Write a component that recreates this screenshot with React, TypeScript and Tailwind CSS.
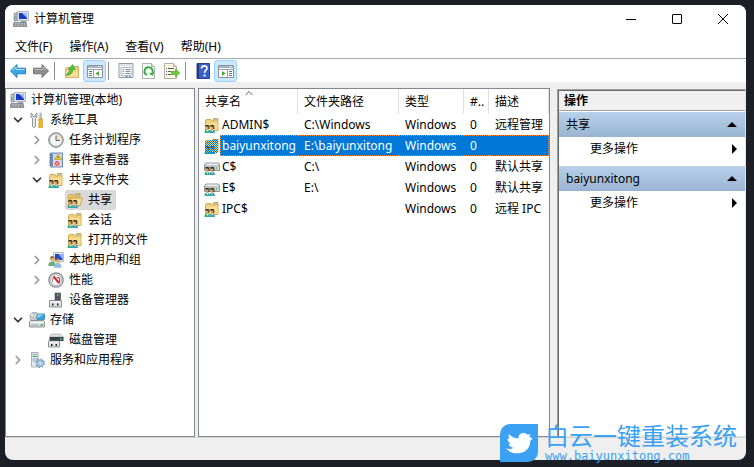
import { useState } from 'react';
import type { ReactNode } from 'react';
import { ChevronDown, ChevronRight, ChevronUp } from 'lucide-react';
import clsx from 'clsx';

type IconName =
  | 'computer' | 'tools' | 'clock' | 'events' | 'share' | 'shareOpen' | 'users'
  | 'perf' | 'device' | 'storage' | 'disk' | 'services' | 'drive';

interface TreeItem {
  label: string;
  icon: IconName;
  open?: boolean;
  expandable?: boolean;
  children?: TreeItem[];
}

const tree: TreeItem[] = [
  {
    label: '系统工具',
    icon: 'tools',
    open: true,
    expandable: true,
    children: [
      { label: '任务计划程序', icon: 'clock', expandable: true },
      { label: '事件查看器', icon: 'events', expandable: true },
      {
        label: '共享文件夹',
        icon: 'share',
        open: true,
        expandable: true,
        children: [
          { label: '共享', icon: 'shareOpen' },
          { label: '会话', icon: 'share' },
          { label: '打开的文件', icon: 'share' },
        ],
      },
      { label: '本地用户和组', icon: 'users', expandable: true },
      { label: '性能', icon: 'perf', expandable: true },
      { label: '设备管理器', icon: 'device' },
    ],
  },
  {
    label: '存储',
    icon: 'storage',
    open: true,
    expandable: true,
    children: [{ label: '磁盘管理', icon: 'disk' }],
  },
  { label: '服务和应用程序', icon: 'services', expandable: true },
];

const shares: { name: string; path: string; icon: IconName; note: string }[] = [
  { name: 'ADMIN$', path: 'C:\\Windows', icon: 'share', note: '远程管理' },
  { name: 'baiyunxitong', path: 'E:\\baiyunxitong', icon: 'share', note: '' },
  { name: 'C$', path: 'C:\\', icon: 'drive', note: '默认共享' },
  { name: 'E$', path: 'E:\\', icon: 'drive', note: '默认共享' },
  { name: 'IPC$', path: '', icon: 'share', note: '远程 IPC' },
];

const menus = ['文件(F)', '操作(A)', '查看(V)', '帮助(H)'];

// the pair of heads that marks anything shared
const people = (
  <>
    <path d="M.5 16c0-2.500.8-3.500 2.500-3.500s3 1 3 3.500z" fill="#35b07c" />
    <path d="M5.500 16c0-2.500.8-3.500 2.500-3.500s3 1 3 3.500z" fill="#3d9fc0" />
    <path d="M2.300 13l1.200 1.800L4.700 13M7.200 13l1 1.600 1-1.600" fill="#eef8f4" />
    <path d="M2.500 9h2.500v3l-1.200 1-1.300-1zM7.200 9h2.500v3l-1.200 1-1.300-1z" fill="#cf9c5c" />
    <path d="M1.500 8h3l1 1v3h-1V9.500h-2l-1 .5zM6.300 8h3l1 1v3h-1V9.500h-2l-1 .5z" fill="#3d2f20" />
  </>
);

const glyphs: Record<IconName, ReactNode> = {
  computer: (
    <>
      <path d="M1 2.500L4 1.500V10H1z" fill="#b9bec4" stroke="#747b84" strokeWidth=".6" />
      <path d="M2 5v3" stroke="#40b070" />
      <path d="M4.500.5h11v9h-11z" fill="#dfe3e8" stroke="#a3a9b2" strokeWidth=".8" />
      <path d="M6 2h8v6H6z" fill="#173bc4" />
      <path d="M9 2h5v5z" fill="#9fbcf7" />
      <path d="M8 10h5l1 1.500H7z" fill="#a2a8af" />
      <path d="M1 11.500h12l1 4H0z" fill="#858b92" stroke="#6b7179" strokeWidth=".6" />
      <path d="M2 12.700h10M1.500 14.200h9" stroke="#dfe2e5" strokeDasharray="2 1" strokeWidth=".7" />
      <path d="M11 14h2" stroke="#d8c64b" />
    </>
  ),
  tools: (
    <>
      <path d="M2 1v4l1.500 1.500v7.500c0 2 3 2 3 0V6.500L8 5V1L6.300 2.500v2H3.800v-2z" fill="#e6e8ea" stroke="#7b8187" strokeWidth=".8" />
      <path d="M10.800 1h1.700v6h-1.700z" fill="#c6c9cc" stroke="#888" strokeWidth=".4" />
      <path d="M9.800 7h3.700v2l-.7 1 .7 1v4.500H9.800V11l.7-1-.7-1z" fill="#f7b81c" stroke="#c08510" strokeWidth=".6" />
    </>
  ),
  clock: (
    <>
      <circle cx="8" cy="8" r="7.300" fill="#c3c6ca" stroke="#74787d" strokeWidth=".9" />
      <circle cx="8" cy="8" r="5.600" fill="#f7f8fa" />
      <path d="M8 8V2.400A5.600 5.600 0 0 1 13.600 8z" fill="#f6dfae" />
      <path d="M8 3.500V8.500h4" stroke="#4e6088" fill="none" />
    </>
  ),
  events: (
    <>
      <path d="M2.500 1h12v14h-12z" fill="#c9dbf5" stroke="#62779f" strokeWidth=".9" />
      <path d="M3 1.500h2v13H3z" fill="#6d8ec4" />
      <path d="M1 3h2.500M1 5.500h2.500M1 8h2.500M1 10.500h2.500M1 13h2.500" stroke="#68768a" strokeWidth=".8" />
      <path d="M10 2.200l3.500 5.300h-7z" fill="#ffd62e" stroke="#a58d22" strokeWidth=".6" />
      <path d="M10 4.300v2" stroke="#333" strokeWidth=".9" />
      <circle cx="9" cy="11.500" r="2.700" fill="#e2453c" stroke="#fff" strokeWidth=".5" />
      <path d="M8 10.500l2 2m0-2l-2 2" stroke="#fff" strokeWidth=".8" />
    </>
  ),
  share: (
    <>
      <path d="M1.500 13.500V3.500l1-1H7L8.500 4h1V1.500h4.500V13.500z" fill="#f0cd76" stroke="#c99a3c" strokeWidth=".8" />
      <path d="M2 5.500h11.600V13H2z" fill="#f9dc90" />
      <path d="M10.500 3h2.500" stroke="#6cb0e0" />
      {people}
    </>
  ),
  shareOpen: (
    <>
      <path d="M1.500 13.500V3.500l1-1H6L7.500 4h1V1.500h4.500V13.500z" fill="#e9c468" stroke="#c99a3c" strokeWidth=".8" />
      <path d="M9.500 3H12" stroke="#6cb0e0" />
      <path d="M4 6h11.500L13 13.500H2z" fill="#fbe09a" stroke="#c4953a" strokeWidth=".8" />
      {people}
    </>
  ),
  users: (
    <>
      <path d="M5.500.5h10v9h-10z" fill="#dfe3e8" stroke="#a0a6ae" strokeWidth=".7" />
      <path d="M7 2h7.500v6H7z" fill="#1f49c8" />
      <path d="M10.500 2h4v5z" fill="#9ab6f3" />
      <path d="M.3 14c0-3.500 1.500-4.500 3.700-4.500s3.500 1 3.500 4.500z" fill="#6bb070" />
      <path d="M6 15.700c0-3.700 1.500-4.700 3.800-4.700s3.700 1 3.700 4.700z" fill="#8bbfe6" />
      <circle cx="4.300" cy="7" r="2.300" fill="#dcae78" />
      <path d="M2 7c0-4 4.700-3.700 4.700-.3L5 5.500z" fill="#8a6538" />
      <circle cx="9.700" cy="9" r="2.300" fill="#e6bb86" />
      <path d="M7.300 9.300c-.3-4.200 4.700-4.200 4.800 0l-1.500-2z" fill="#936a3a" />
    </>
  ),
  perf: (
    <>
      <circle cx="8" cy="8" r="7.200" fill="#e9eaeb" stroke="#808388" strokeWidth="1.200" />
      <circle cx="8" cy="8" r="5.400" fill="#fff" stroke="#8c8f93" strokeWidth=".7" />
      <path d="M4.500 10V7.200l1-1.700M10.800 5.200l.8 1.500V10" stroke="#757575" strokeWidth=".8" fill="none" />
      <path d="M5.500 4.500l5.500 6.500" stroke="#d4262b" strokeWidth="2" />
      <path d="M8.700 5.500h2l.8 2v3" stroke="#d4262b" fill="none" />
    </>
  ),
  device: (
    <>
      <path d="M7 1h5.500v8H7z" fill="#55595f" stroke="#484c51" strokeWidth=".6" />
      <path d="M9 3h1.500" stroke="#4ae05c" strokeWidth="1.500" />
      <path d="M1.500 8.500h12V15h-12z" fill="#dfe1e3" stroke="#70747a" strokeWidth=".8" />
      <path d="M2 9h11v1.500H2z" fill="#f6f6f6" />
      <path d="M4 11.500h1.500v2H4zM9 11.500h1.500v2H9z" fill="#222" />
    </>
  ),
  storage: (
    <>
      <circle cx="5.700" cy="5" r="4.700" fill="#c9cdd1" stroke="#8a9097" strokeWidth=".7" />
      <path d="M5.700 5L2 2.500M5.700 5L9 1.500" stroke="#f4f6f8" strokeWidth="1.300" />
      <circle cx="5.700" cy="5" r="1.400" fill="#fff" stroke="#80868c" strokeWidth=".6" />
      <path d="M8 2h7.500v5.500H8z" fill="#2fa3dd" stroke="#2a78a6" strokeWidth=".7" />
      <path d="M8.500 2.500h6.500L8.500 6z" fill="#9adcf8" />
      <path d="M.5 9.500l1-1h13l1 1v5.500H.5z" fill="#d9dcdf" stroke="#787e84" strokeWidth=".8" />
      <path d="M1.500 10.500h13" stroke="#fff" />
      <path d="M2 13h7" stroke="#a2a7ac" />
      <path d="M11.500 13H14" stroke="#24c545" strokeWidth="1.500" />
    </>
  ),
  disk: (
    <>
      <path d="M3.500 2h9l3 3H1.500z" fill="#dfe2e4" stroke="#9a9ea3" strokeWidth=".6" />
      <path d="M1.500 5h14v4h-14z" fill="#3c4045" />
      <path d="M12 7h2" stroke="#34dd4c" strokeWidth="1.500" />
      <path d="M.5 9h11v6H.5z" fill="#dfe1e3" stroke="#75797e" strokeWidth=".8" />
      <path d="M1 9.500h10v1.200H1z" fill="#f6f6f6" />
      <path d="M3 12h1.500v2H3zM7.500 12H9v2H7.500z" fill="#222" />
    </>
  ),
  services: (
    <>
      <path d="M2.500.5H9V15H2.500z" fill="#e3e8ed" stroke="#98a0a9" strokeWidth=".8" />
      <path d="M3.500 2.500H8M3.500 7H8M3.500 9H8" stroke="#8794a3" strokeWidth=".8" />
      <path d="M3.500 4.500H8" stroke="#37ad68" />
      <circle cx="11.200" cy="11.200" r="3.400" fill="#b9d3ea" stroke="#6f9cc4" />
      <circle cx="11.200" cy="11.200" r="4.200" fill="none" stroke="#6f9cc4" strokeWidth="1.200" strokeDasharray="1.500 1.800" />
      <circle cx="11.200" cy="11.200" r="1.300" fill="#fff" stroke="#6f9cc4" strokeWidth=".6" />
    </>
  ),
  drive: (
    <>
      <path d="M2 4h12.500l1 2v5.500H.5V6z" fill="#b9bdc1" stroke="#7d8186" strokeWidth=".8" />
      <path d="M2.500 4.500h11.500l.7 1.700H1.500z" fill="#eceeef" />
      <path d="M11.500 7.500h3v3h-3z" fill="#e3e5e7" />
      <path d="M12.500 8v2" stroke="#2fc94c" />
      {people}
    </>
  ),
};

function Icon({ name, dimmed }: { name: IconName; dimmed?: boolean }) {
  return (
    <svg viewBox="0 0 16 16" className="size-4 shrink-0" aria-hidden="true">
      {glyphs[name]}
      {dimmed && (
        <>
          <pattern id="dither" width="2" height="2" patternUnits="userSpaceOnUse">
            <path d="M0 0h1v1H0zM1 1h1v1H1z" fill="#0078d7" />
          </pattern>
          <path d="M1 3l7-1 1-1h5v13l-4 2H1z" fill="url(#dither)" shapeRendering="crispEdges" />
        </>
      )}
    </svg>
  );
}

function ToolButton({ label, active, children }: { label: string; active?: boolean; children: ReactNode }) {
  return (
    <button
      aria-label={label}
      className={clsx(
        'flex h-[22px] w-[23px] items-center justify-center rounded-[3px] border',
        active ? 'border-[#99d1ff] bg-[#cce8ff]' : 'border-transparent',
      )}
    >
      <svg viewBox="0 0 16 16" className="size-4 shrink-0" aria-hidden="true">{children}</svg>
    </button>
  );
}

function Separator() {
  return <span className="mr-[5px] ml-0.5 h-[18px] w-px bg-[#8c8c8c]" />;
}

function Toolbar() {
  return (
    <div className="flex h-[23px] shrink-0 items-center bg-white pl-px">
      <ToolButton label="后退">
        <path d="M.5 8L7 1.500v3.700h8.500v5.600H7v3.700z" fill="#36a7e8" stroke="#2278b3" strokeWidth=".9" />
        <path d="M2.500 7.500L6 4v2.500h8.500" stroke="#a5e0fb" fill="none" />
      </ToolButton>
      <ToolButton label="前进">
        <path d="M15.500 8L9 1.500v3.700H.5v5.600H9v3.700z" fill="#8d8d8d" stroke="#6c6c6c" strokeWidth=".9" />
        <path d="M1.500 6.500H10V4L13 7" stroke="#bcbcbc" fill="none" />
      </ToolButton>
      <Separator />
      <ToolButton label="上一级">
        <path d="M1.500 14.500V5.500l1-1H6L7.500 6H9V3.500h5.500v11z" fill="#f1cf80" stroke="#cba24f" strokeWidth=".8" />
        <path d="M2 7.500h12V14H2z" fill="#f9dd95" />
        <path d="M12 3.500h2" stroke="#6cb0e0" />
        <path d="M2.500 11c2-.8 3-2.500 3.200-4.500H4L8.500 1.500l3 5H9c-.2 3.500-2.300 5.500-6.500 6z" fill="#55bb40" stroke="#3c9530" strokeWidth=".5" />
      </ToolButton>
      <ToolButton label="显示/隐藏控制台树" active>
        <path d="M.5 2.500h15v12H.5z" fill="#fff" stroke="#8a929d" />
        <path d="M1 3h14v2H1z" fill="#aab2bd" />
        <path d="M1 6.500h14M6.500 7v7.500" stroke="#9aa2ad" />
        <path d="M2 8.500h3M2 10.500h3M2 12.500h3" stroke="#4b79ad" />
        <path d="M12 8v5L8.500 10.500z" fill="#43a72c" />
        <path d="M11 3.500h1M13 3.500h1" stroke="#fff" />
      </ToolButton>
      <Separator />
      <ToolButton label="属性">
        <path d="M1 .5h14v14H1z" fill="#f6f7f8" stroke="#9299a1" />
        <path d="M1.500 2h13" stroke="#c9ced5" />
        <path d="M3 4.500h10v8H3z" fill="#fff" stroke="#a2aab3" strokeWidth=".8" />
        <path d="M4.500 6.500h1.500M4.500 8.500h1.500M4.500 10.500h1.500M7.500 6.500H12M7.500 8.500H12M7.500 10.500H12" stroke="#7d8ea0" />
        <path d="M7 13.700h3M11 13.700h2" stroke="#41a6c9" />
      </ToolButton>
      <ToolButton label="刷新">
        <path d="M1.500.5h9l3 3v12h-12z" fill="#fcfcfc" stroke="#b0b0b0" />
        <path d="M10.500.5v3h3" fill="#e4e4e4" stroke="#b0b0b0" />
        <path d="M6 12A4 4 0 1 1 11.500 9" fill="none" stroke="#35ab3a" strokeWidth="1.900" />
        <path d="M13.500 8.500l-2 4.500L8 10.500z" fill="#35ab3a" />
      </ToolButton>
      <ToolButton label="导出列表">
        <path d="M.5.5h9l3 3v12H.5z" fill="#fdf9e9" stroke="#b5af9a" />
        <path d="M9.500.5v3h3" fill="#ece3c3" stroke="#b5af9a" />
        <path d="M2 5.500h1M2 8.500h1M2 11.500h1M4 5.500h6M4 8.500h3M4 11.500h3" stroke="#5c5c5c" />
        <path d="M7.500 8.500h4V6l4.200 4-4.200 4v-2.500h-4z" fill="#6ecb38" stroke="#419d22" strokeWidth=".6" />
      </ToolButton>
      <Separator />
      <ToolButton label="帮助">
        <path d="M2 .5h12.500v15H2z" fill="#3a60c9" stroke="#2a4285" />
        <path d="M2 1h2v14H2z" fill="#23397c" />
        <path d="M6.500 5.500c0-3.500 5.500-3.500 5.500-.3 0 2-2.500 2-2.500 4.800" fill="none" stroke="#fff" strokeWidth="1.600" />
        <path d="M8.500 11.500h2v2h-2z" fill="#fff" />
      </ToolButton>
      <ToolButton label="显示/隐藏操作窗格" active>
        <path d="M.5 2.500h15v12H.5z" fill="#fff" stroke="#8a929d" />
        <path d="M1 3h14v2H1z" fill="#aab2bd" />
        <path d="M1 6.500h14M9.500 7v7.500" stroke="#9aa2ad" />
        <path d="M11 8.500h3M11 10.500h3M11 12.500h3" stroke="#4b79ad" />
        <path d="M4 8v5l3.500-2.500z" fill="#43a72c" />
        <path d="M11 3.500h1M13 3.500h1" stroke="#fff" />
      </ToolButton>
    </div>
  );
}

function TreeNode({ item, selected, onSelect }: { item: TreeItem; selected: string; onSelect: (label: string) => void }) {
  const [open, setOpen] = useState(!!item.open);

  return (
    <li>
      <div className="flex h-5 items-center">
        <span className="flex w-[17px] shrink-0 justify-center pr-0.5">
          {item.expandable && (
            <button aria-label={item.label} aria-expanded={open} onClick={() => setOpen(!open)}>
              {open
                ? <ChevronDown strokeWidth={3} className="size-3.5 text-[#333]" />
                : <ChevronRight strokeWidth={3} className="size-3.5 text-[#999]" />}
            </button>
          )}
        </span>
        <button
          onClick={() => onSelect(item.label)}
          className={clsx(
            'flex h-5 items-center gap-[5px] rounded-xs pr-1 pl-0.5 whitespace-nowrap',
            selected === item.label && 'bg-[#d9d9d9]',
          )}
        >
          <Icon name={item.icon} />
          {item.label}
        </button>
      </div>
      {open && item.children && (
        <ul className="pl-[19px]">
          {item.children.map((c) => (
            <TreeNode key={c.label} item={c} selected={selected} onSelect={onSelect} />
          ))}
        </ul>
      )}
    </li>
  );
}

function ShareTable() {
  const [selected, setSelected] = useState('baiyunxitong');
  const head = 'border-r border-[#e0e0e0] pl-1.5 text-left font-normal';

  return (
    <table className="w-full table-fixed border-separate border-spacing-0">
      <thead>
        <tr className="h-[25px]">
          <th className={clsx(head, 'relative w-[99px]')}>
            共享名
            <ChevronUp className="absolute -top-0.5 left-[44px] size-3 text-[#555]" />
          </th>
          <th className={clsx(head, 'w-[101px]')}>文件夹路径</th>
          <th className={clsx(head, 'w-[65px]')}>类型</th>
          <th className={clsx(head, 'w-[25px]')}>#..</th>
          <th className={head}>描述</th>
        </tr>
      </thead>
      <tbody>
        {shares.map((s) => {
          const on = s.name === selected;
          const cell = clsx(
            'h-[21px] border-y pl-1.5 whitespace-nowrap',
            on ? 'border-dotted border-[#ff8728] bg-[#0078d7] text-white' : 'border-transparent',
          );
          return (
            <tr key={s.name} onClick={() => setSelected(s.name)}>
              <td className="p-0">
                <div className="flex h-[21px] items-center pl-[5px]">
                  <Icon name={s.icon} dimmed={on} />
                  <span
                    className={clsx(
                      'flex h-full flex-1 items-center border-y border-l pl-px',
                      on ? 'border-dotted border-[#ff8728] bg-[#0078d7] text-white' : 'border-transparent',
                    )}
                  >
                    {s.name}
                  </span>
                </div>
              </td>
              <td className={cell}>{s.path}</td>
              <td className={cell}>Windows</td>
              <td className={cell}>0</td>
              <td className={clsx(cell, 'border-r')}>{s.note}</td>
            </tr>
          );
        })}
      </tbody>
    </table>
  );
}

function ActionGroup({ title }: { title: string }) {
  return (
    <section className="mb-[5px]">
      <button className="flex h-[25px] w-full items-center justify-between bg-linear-to-b from-[#b9d1ea] to-[#99b4d1] pr-2 pl-[7px]">
        {title}
        <svg viewBox="0 0 10 5" className="h-[5px] w-2.5" aria-hidden="true"><path d="M5 0l5 5H0z" /></svg>
      </button>
      <button className="flex h-6 w-full items-center justify-between pr-2 pl-[31px]">
        更多操作
        <svg viewBox="0 0 5 10" className="h-2.5 w-[5px]" aria-hidden="true"><path d="M0 0l5 5-5 5z" /></svg>
      </button>
    </section>
  );
}

function Watermark() {
  return (
    <div className="pointer-events-none absolute right-[9px] bottom-1 flex items-center gap-[7px] text-[#3ba1f2]">
      <svg viewBox="0 0 38 38" className="size-[38px] shrink-0" aria-hidden="true">
        <path d="M10 0h28v28a10 10 0 0 1-10 10H0V10A10 10 0 0 1 10 0z" fill="#3ba1f2" />
        <path
          d="M9 10c3 3.500 6 4.500 9.500 4.500-.5-3 2-5.500 5-5.500 1.800 0 3 .6 4 1.700l3-.7-1.300 2.700 3.300 1.800-2.200 2.500c0 7.500-5.800 12.300-13 12.300-4.300 0-8-1.300-11.300-5 3.200 1.200 5.500.8 7.500-.5-2.800-.5-4-1.800-5-4h2.500c-2.600-1.600-3.500-3.200-3.500-5.500l2 .7C8.500 13 8.300 12 9 10z"
          fill="#fff"
        />
      </svg>
      <div className="flex w-[200px] flex-col">
        <span className="text-2xl leading-[26px]">白云一键重装系统</span>
        <span className="font-['DejaVu_Sans_Mono',monospace] text-xs leading-[14px]">www.baiyunxitong.com</span>
      </div>
    </div>
  );
}

export default function App() {
  const [selected, setSelected] = useState('共享');

  return (
    <div className="relative flex min-h-screen flex-col bg-[#1d1f26] pt-[5px] pr-2 pb-[7px] pl-[5px] font-['Noto_Sans','Noto_Sans_CJK_SC',sans-serif] text-xs leading-4 text-black">
      <div className="flex flex-1 flex-col overflow-hidden rounded-lg bg-[#efefef]">
        <header className="flex h-7 shrink-0 items-center bg-white pl-2">
          <Icon name="computer" />
          <h1 className="ml-[5px] flex-1">计算机管理</h1>
          <button aria-label="最小化" className="flex h-full w-[46px] items-center justify-center">
            <span className="h-px w-2.5 bg-black" />
          </button>
          <button aria-label="最大化" className="flex h-full w-[46px] items-center justify-center">
            <span className="size-2.5 rounded-[1px] border border-black" />
          </button>
          <button aria-label="关闭" className="flex h-full w-[46px] items-center justify-center">
            <svg viewBox="0 0 10 10" className="size-2.5" aria-hidden="true">
              <path d="M0 0l10 10M10 0L0 10" stroke="#000" />
            </svg>
          </button>
        </header>

        <nav className="flex h-[26px] shrink-0 items-center gap-px border-b border-[#a8a8a8] bg-white pt-0.5 pl-0.5">
          {menus.map((m) => (
            <button key={m} className="px-2">{m}</button>
          ))}
        </nav>

        <Toolbar />

        <main className="flex flex-1 border-b border-[#d4d4d4] pt-1.5">
          <aside className="w-[190px] shrink-0 border border-[#828790] bg-white pt-px">
            <button className="flex h-5 items-center gap-[5px] pl-1">
              <Icon name="computer" />
              计算机管理(本地)
            </button>
            <ul className="pl-1">
              {tree.map((t) => (
                <TreeNode key={t.label} item={t} selected={selected} onSelect={setSelected} />
              ))}
            </ul>
          </aside>

          <div className="ml-[3px] min-w-0 flex-1 border border-[#828790] bg-white">
            <ShareTable />
          </div>

          <aside className="mt-px ml-[7px] w-[189px] shrink-0 border border-t-[#a0a0a0] border-r-[#e3e3e3] border-b-[#e3e3e3] border-l-[#a0a0a0]">
            <div className="h-full border-t border-l border-[#696969] bg-white">
              <h2 className="mb-px flex h-5 items-center border-b border-[#a0a0a0] bg-[#f0f0f0] pl-[5px] font-bold">操作</h2>
              <ActionGroup title="共享" />
              <ActionGroup title="baiyunxitong" />
            </div>
          </aside>
        </main>

        <footer className="h-[22px] shrink-0" />
      </div>
      <Watermark />
    </div>
  );
}
